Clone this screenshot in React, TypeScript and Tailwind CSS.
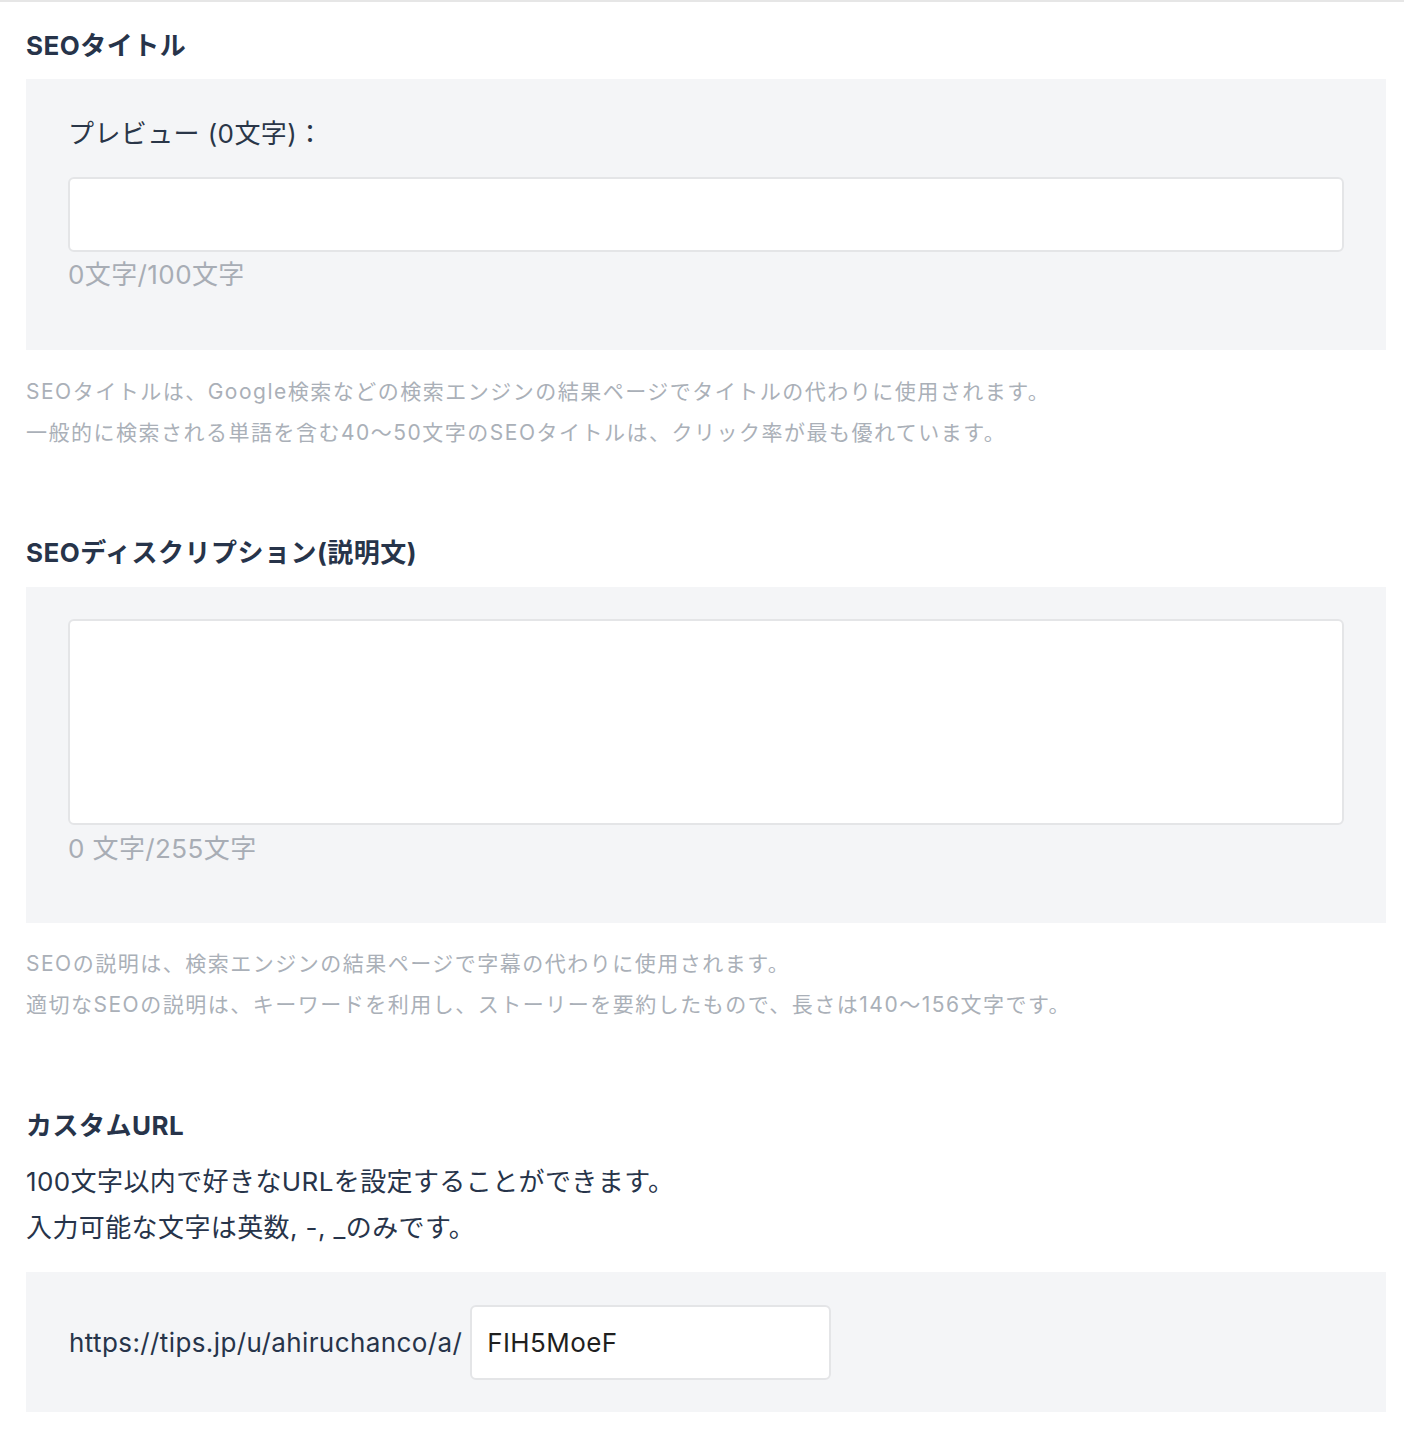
const font = {
  fontFamily:
    '"Inter", "Noto Sans CJK JP", sans-serif',
};

const Heading = ({ children }: { children: React.ReactNode }) => (
  <h2 className="text-[26px] font-bold leading-[26px] text-[#27344a] tracking-[0.5px]">
    {children}
  </h2>
);

const HelpText = ({ lines, className }: { lines: string[]; className: string }) => (
  <div className={`${className} text-[21px] leading-[41px] text-[#aab0b8] tracking-[1.5px]`}>
    {lines.map((line) => (
      <p key={line}>{line}</p>
    ))}
  </div>
);

export default function App() {
  return (
    <div
      className="min-h-[1434px] w-[1404px] bg-white border-t-2 border-[#e6e6e6] tracking-[0.4px]"
      style={font}
    >
      <div className="px-[26px] pr-[18px]">
        {/* SEO title */}
        <section className="pt-[31px]">
          <Heading>SEOタイトル</Heading>
          <div className="mt-[20px] h-[271px] bg-[#f4f5f7] px-[42px] pt-[40px]">
            <p className="text-[26px] leading-[30px] text-[#2a3648]">
              プレビュー (0文字)：
            </p>
            <div className="mt-[28px] h-[75px] rounded-[6px] border-2 border-[#e4e5e7] bg-white" />
            <p className="mt-[6px] text-[26px] leading-[34px] text-[#a8adb5]">
              0文字/100文字
            </p>
          </div>
          <HelpText
            className="mt-[21px]"
            lines={[
              "SEOタイトルは、Google検索などの検索エンジンの結果ページでタイトルの代わりに使用されます。",
              "一般的に検索される単語を含む40〜50文字のSEOタイトルは、クリック率が最も優れています。",
            ]}
          />
        </section>

        {/* SEO description */}
        <section className="pt-[87px]">
          <Heading>SEOディスクリプション(説明文)</Heading>
          <div className="mt-[21px] h-[336px] bg-[#f4f5f7] px-[42px] pt-[32px]">
            <div className="h-[206px] rounded-[6px] border-2 border-[#e4e5e7] bg-white" />
            <p className="mt-[7px] text-[26px] leading-[34px] text-[#a8adb5]">
              0 文字/255文字
            </p>
          </div>
          <HelpText
            className="mt-[20px]"
            lines={[
              "SEOの説明は、検索エンジンの結果ページで字幕の代わりに使用されます。",
              "適切なSEOの説明は、キーワードを利用し、ストーリーを要約したもので、長さは140〜156文字です。",
            ]}
          />
        </section>

        {/* Custom URL */}
        <section className="pt-[88px]">
          <Heading>カスタムURL</Heading>
          <div className="mt-[20px] text-[26px] leading-[46px] text-[#27344a]">
            <p>100文字以内で好きなURLを設定することができます。</p>
            <p>入力可能な文字は英数, -, _のみです。</p>
          </div>
          <div className="mt-[21px] flex h-[140px] items-center bg-[#f4f5f7] pl-[43px]">
            <span className="text-[26px] text-[#27344a]">
              https://tips.jp/u/ahiruchanco/a/
            </span>
            <div className="ml-[8px] flex h-[75px] w-[361px] items-center rounded-[6px] border-2 border-[#e4e5e7] bg-white px-[15px] text-[26px] text-[#1f1f1f]">
              FIH5MoeF
            </div>
          </div>
        </section>
      </div>
    </div>
  );
}
